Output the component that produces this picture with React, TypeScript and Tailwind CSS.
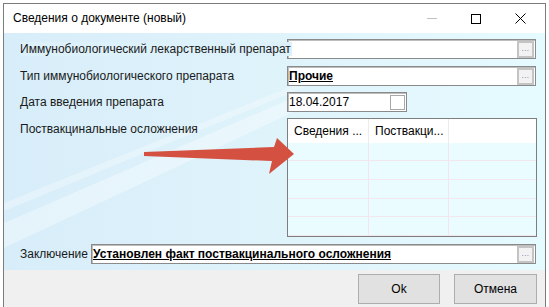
import React from "react";

const font = { fontFamily: '"Liberation Sans", Arial, sans-serif' };

function Ellipsis() {
  return (
    <div className="w-[17px] h-[17px] mr-[1px] border-2 border-[#c4c4c4] bg-[#f2f2f2] flex items-end justify-center pb-[3px]">
      <span className="text-[8px] leading-none text-[#6a6aa8] tracking-[0.5px]">...</span>
    </div>
  );
}

function Field({ children, className = "" }: { children?: React.ReactNode; className?: string }) {
  return (
    <div className={"h-[20px] bg-white border border-[#8a8a8a] shadow-[inset_1px_1px_0_#bdbdbd] flex items-center " + className}>
      {children}
    </div>
  );
}

export default function App() {
  const rows = [0, 1, 2, 3, 4];
  return (
    <div className="w-[549px] h-[307px] bg-white overflow-hidden relative" style={font}>
      <div className="absolute left-[3px] top-[3px] w-[543px] h-[310px] border-l border-r border-t border-[#7c7c7c] bg-white flex flex-col">
        {/* title bar */}
        <div className="h-[29px] flex items-center text-[12px] text-black">
          <span className="ml-[9px] mt-[-1px]">Сведения о документе (новый)</span>
          <div className="ml-auto flex items-center">
            <div className="w-[10px] h-[1px] bg-[#c0c0c0] mr-[34px]" />
            <div className="w-[10px] h-[10px] border border-black mr-[34px]" />
            <svg width="11" height="11" viewBox="0 0 11 11" className="mr-[19px]">
              <path d="M0.5 0.5 L10.5 10.5 M10.5 0.5 L0.5 10.5" stroke="#000" strokeWidth="1" />
            </svg>
          </div>
        </div>
        {/* content */}
        <div className="h-[237px] bg-gradient-to-r from-[#d7edf9] via-[#dff3fb] to-[#e6fbff] relative text-[12px] text-[#1a1a1a]">
          <svg className="absolute left-0 top-0 pointer-events-none" width="543" height="237" viewBox="0 0 543 237">
            <polygon points="0,190 300,60 330,60 0,215" fill="#ffffff" opacity="0.35" />
            <polygon points="0,170 320,40 335,40 0,178" fill="#ffffff" opacity="0.3" />
          </svg>
          <div className="relative flex flex-col pt-[6px]">
            <div className="flex items-center h-[20px]">
              <div className="ml-[16px] w-[267px] relative z-10 whitespace-nowrap">
                <span className="bg-[#dcf1fa] pr-[1px]">Иммунобиологический лекарственный препарат</span>
              </div>
              <Field className="w-[249px] justify-end">
                <Ellipsis />
              </Field>
            </div>
            <div className="flex items-center h-[20px] mt-[7px]">
              <span className="ml-[16px] w-[267px]">Тип иммунобиологического препарата</span>
              <Field className="w-[249px]">
                <span className="ml-[1px] font-bold underline text-black flex-1">Прочие</span>
                <Ellipsis />
              </Field>
            </div>
            <div className="flex items-center h-[20px] mt-[6px]">
              <span className="ml-[16px] w-[267px]">Дата введения препарата</span>
              <Field className="w-[120px]">
                <span className="ml-[1px] text-black flex-1">18.04.2017</span>
                <div className="w-[15px] h-[15px] mr-[1px] border border-[#a8a8a8] bg-white" />
              </Field>
            </div>
            <div className="flex items-start mt-[6px]">
              <span className="ml-[16px] w-[267px] mt-[2px]">Поствакцинальные осложнения</span>
              <div className="w-[250px] h-[119px] border border-[#7e7e7e] bg-[#eafcff] flex flex-col">
                <div className="h-[24px] bg-white flex items-center text-black">
                  <div className="w-[81px] h-full flex items-center pl-[6px] border-r border-[#ececec]">Сведения ...</div>
                  <div className="w-[80px] h-full flex items-center pl-[6px] border-r border-[#ececec]">Поствакци...</div>
                </div>
                {rows.map((r) => (
                  <div key={r} className="h-[19px] flex border-b border-[#f1e7ec]">
                    <div className="w-[81px] border-r border-[#f1e7ec]" />
                    <div className="w-[80px] border-r border-[#f1e7ec]" />
                  </div>
                ))}
              </div>
            </div>
            <div className="flex items-center h-[20px] mt-[7px]">
              <span className="ml-[16px] w-[71px]">Заключение</span>
              <Field className="w-[445px]">
                <span className="ml-[1px] font-bold underline text-black flex-1 whitespace-nowrap">Установлен факт поствакцинального осложнения</span>
                <Ellipsis />
              </Field>
            </div>
          </div>
          <svg className="absolute left-0 top-0 pointer-events-none" width="543" height="237" viewBox="3 32 543 237">
            <polygon points="143,151 273,146 276,137 293,153 268,173 271,160 143,155" fill="#d45040" />
          </svg>
        </div>
        {/* buttons */}
        <div className="h-[41px] bg-[#f0f0f0] flex items-start justify-end pt-[4px] text-[12px] text-black">
          <button className="w-[82px] h-[30px] bg-[#e1e1e1] border border-[#adadad] mr-[14px]" style={font}>Ok</button>
          <button className="w-[83px] h-[30px] bg-[#e1e1e1] border border-[#adadad] mr-[8px]" style={font}>Отмена</button>
        </div>
      </div>
    </div>
  );
}
